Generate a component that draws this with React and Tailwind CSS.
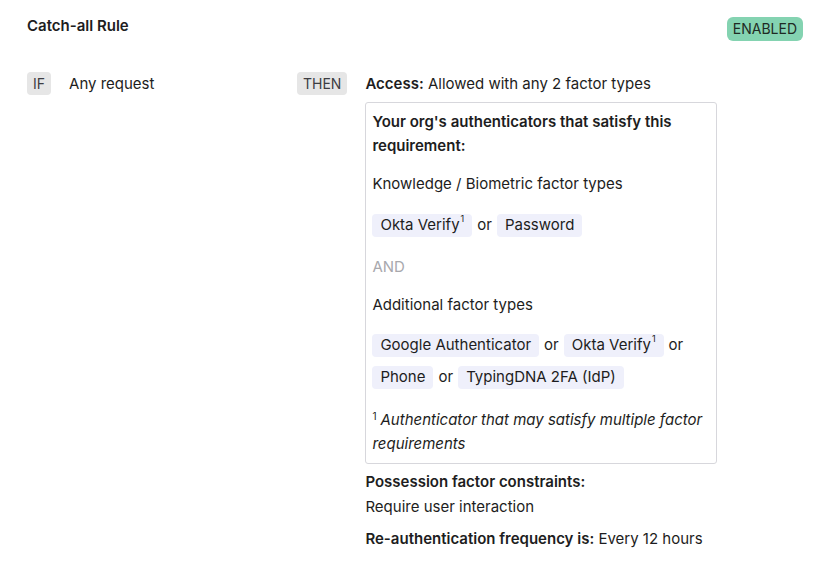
import React from 'react';

const Chip = ({ children, sup }) => (
  <span className="inline-flex items-center h-[23px] px-2 bg-[#eff0fb] rounded-sm">
    {children}
    {sup && <sup className="text-[9px] ml-[1px] -mt-1">1</sup>}
  </span>
);

const Or = () => <span className="px-[5px]">or</span>;

const Tag = ({ children }) => (
  <span className="inline-flex items-center h-[23px] px-[6px] rounded bg-[#e6e6e6] text-[14px] text-[#3d3d42]">
    {children}
  </span>
);

export default function App() {
  return (
    <div
      className="w-[815px] h-[573px] bg-white text-[#1d1d21] text-[15px] leading-[24px] px-[27px] pt-[13px]"
      style={{ fontFamily: 'Inter, "Noto Sans", sans-serif' }}
    >
      <div className="flex items-start justify-between -mr-[15px]">
        <h1 className="text-[15px] font-semibold leading-[24px] pt-[1px]">Catch-all Rule</h1>
        <span className="mt-[4px] inline-flex items-center h-[24px] px-[6px] rounded-md bg-[#84d3b1] text-[14px] text-[#1f2a24]">
          ENABLED
        </span>
      </div>

      <div className="flex mt-[31px]">
        <div className="w-[270px] flex items-start gap-[18px]">
          <Tag>IF</Tag>
          <span className="leading-[23px]">Any request</span>
        </div>
        <div className="flex items-start gap-[18px]">
          <Tag>THEN</Tag>
          <div className="w-[352px]">
            <div className="leading-[23px]">
              <span className="font-semibold">Access:</span> Allowed with any 2 factor types
            </div>
            <div className="mt-[7px] border border-[#d7d7dc] rounded-[3px] px-[6px] pt-[7px] pb-[7px]">
              <div className="font-semibold">Your org's authenticators that satisfy this requirement:</div>
              <div className="mt-[14px]">Knowledge / Biometric factor types</div>
              <div className="mt-[17px] flex items-center">
                <Chip sup>Okta Verify</Chip>
                <Or />
                <Chip>Password</Chip>
              </div>
              <div className="mt-[18px] text-[#a8a8ad]">AND</div>
              <div className="mt-[14px]">Additional factor types</div>
              <div className="mt-[16px] flex flex-wrap items-center gap-y-[8px]">
                <Chip>Google Authenticator</Chip>
                <Or />
                <Chip sup>Okta Verify</Chip>
                <Or />
                <Chip>Phone</Chip>
                <Or />
                <Chip>TypingDNA 2FA (IdP)</Chip>
              </div>
              <div className="mt-[19px] italic">
                <span className="inline-block align-top leading-[10px] text-[10px] not-italic mr-[4px] mt-[3px]">1</span>Authenticator that may satisfy multiple factor requirements
              </div>
            </div>
            <div className="mt-[6px] font-semibold">Possession factor constraints:</div>
            <div className="mt-[1px]">Require user interaction</div>
            <div className="mt-[8px]">
              <span className="font-semibold">Re-authentication frequency is:</span> Every 12 hours
            </div>
          </div>
        </div>
      </div>
    </div>
  );
}
